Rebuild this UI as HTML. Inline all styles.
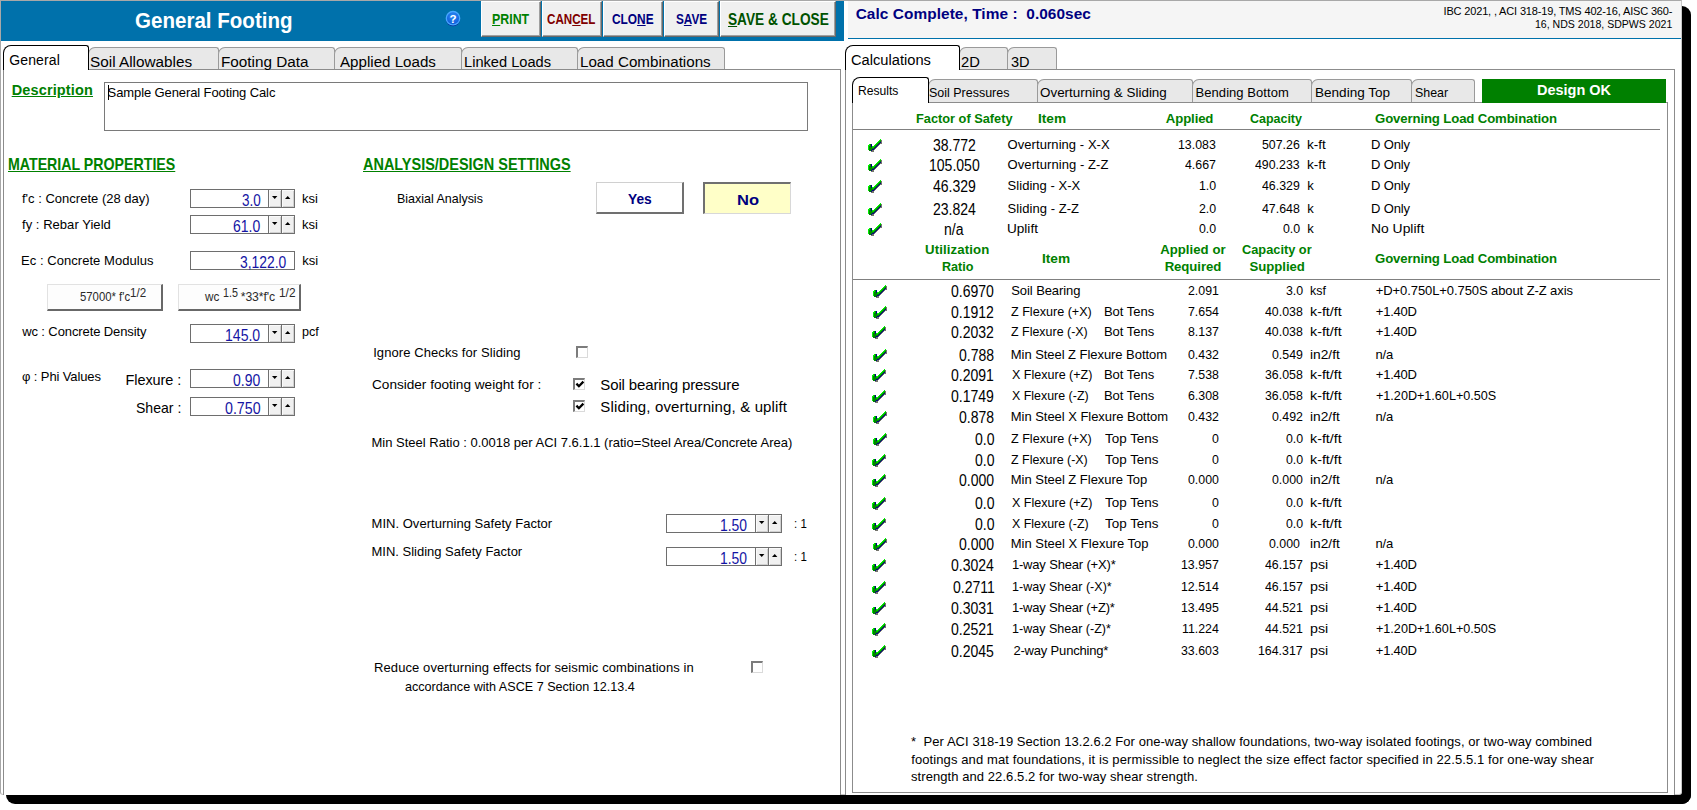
<!DOCTYPE html>
<html><head><meta charset="utf-8"><title>General Footing</title>
<style>
html,body{margin:0;padding:0;}
body{width:1697px;height:810px;background:#fff;position:relative;overflow:hidden;font-family:"Liberation Sans",sans-serif;}
div{position:absolute;box-sizing:border-box;}
.t{position:absolute;white-space:pre;}
svg{position:absolute;overflow:visible;}
u{text-decoration:underline;}
</style></head><body>
<div style="left:1675px;top:6px;width:16px;height:798px;background:#000;border-radius:0 9px 9px 0;"></div>
<div style="left:6px;top:788px;width:1685px;height:16px;background:#000;border-radius:0 0 9px 9px;"></div>
<div style="left:0px;top:0px;width:1682px;height:795px;background:#fff;border-left:1px solid #A8A8A8;border-top:1px solid #A8A8A8;border-bottom:1px solid #C4C4C4;border-right:1px solid #C8C8C8;border-radius:0 0 3px 3px;"></div>
<div style="left:1px;top:1px;width:843px;height:40px;background:#0071AB;"></div>
<span class="t" style="top:9px;font-size:21.3px;line-height:24px;font-weight:bold;color:#fff;left:134.78px;transform:scaleX(0.9650);transform-origin:0 0;">General Footing</span>
<svg style="left:445px;top:10px" width="16" height="17" viewBox="0 0 16 17"><defs><radialGradient id="hg" cx="0.5" cy="0.35" r="0.7"><stop offset="0" stop-color="#2E8CF4"/><stop offset="1" stop-color="#0A54D6"/></radialGradient></defs><circle cx="8" cy="9.2" r="7" fill="#062C9C"/><circle cx="8" cy="8.2" r="6.7" fill="url(#hg)" stroke="#48A8FF" stroke-width="1.3"/><text x="8" y="13" font-family="Liberation Sans" font-weight="bold" font-size="11.5" text-anchor="middle" fill="#fff">?</text></svg>
<div style="left:481px;top:1px;width:60px;height:36px;background:#F0F0F0;border-top:1px solid #fff;border-left:1px solid #fff;border-right:1px solid #696969;border-bottom:1px solid #696969;box-shadow:inset -1px -1px 0 #A0A0A0;"></div>
<span class="t" style="top:11px;font-size:14.5px;line-height:16px;font-weight:bold;color:#008000;left:491.80px;transform:scaleX(0.8535);transform-origin:0 0;"><u>P</u>RINT</span>
<div style="left:542px;top:1px;width:60px;height:36px;background:#F0F0F0;border-top:1px solid #fff;border-left:1px solid #fff;border-right:1px solid #696969;border-bottom:1px solid #696969;box-shadow:inset -1px -1px 0 #A0A0A0;"></div>
<span class="t" style="top:11px;font-size:14.5px;line-height:16px;font-weight:bold;color:#800000;left:546.94px;transform:scaleX(0.8017);transform-origin:0 0;">CAN<u>C</u>EL</span>
<div style="left:603px;top:1px;width:59.5px;height:36px;background:#F0F0F0;border-top:1px solid #fff;border-left:1px solid #fff;border-right:1px solid #696969;border-bottom:1px solid #696969;box-shadow:inset -1px -1px 0 #A0A0A0;"></div>
<span class="t" style="top:11px;font-size:14.5px;line-height:16px;font-weight:bold;color:#000080;left:612.12px;transform:scaleX(0.8195);transform-origin:0 0;">CLO<u>N</u>E</span>
<div style="left:664px;top:1px;width:55px;height:36px;background:#F0F0F0;border-top:1px solid #fff;border-left:1px solid #fff;border-right:1px solid #696969;border-bottom:1px solid #696969;box-shadow:inset -1px -1px 0 #A0A0A0;"></div>
<span class="t" style="top:11px;font-size:14.5px;line-height:16px;font-weight:bold;color:#000080;left:676.05px;transform:scaleX(0.8126);transform-origin:0 0;">S<u>A</u>VE</span>
<div style="left:720px;top:1px;width:116px;height:36px;background:#F0F0F0;border-top:1px solid #fff;border-left:1px solid #fff;border-right:1px solid #696969;border-bottom:1px solid #696969;box-shadow:inset -1px -1px 0 #A0A0A0;"></div>
<span class="t" style="top:11px;font-size:15.6px;line-height:17px;font-weight:bold;color:#005200;left:727.69px;transform:scaleX(0.8766);transform-origin:0 0;"><u>S</u>AVE &amp; CLOSE</span>
<div style="left:3px;top:69px;width:838px;height:726px;border:1px solid #8C8C8C;border-bottom:none;background:#fff;"></div>
<div style="left:3px;top:45px;width:86px;height:25px;background:#fff;border:1px solid #000;border-bottom:none;border-radius:8px 3px 0 0;z-index:2;"></div>
<span class="t" style="top:52px;font-size:14px;line-height:16px;letter-spacing:0.107px;left:9.30px;z-index:3;">General</span>
<div style="left:88px;top:47px;width:131px;height:22px;background:#E8E8E8;border:1px solid #9A9A9A;border-bottom:none;border-radius:7px 3px 0 0;"></div>
<span class="t" style="top:54px;font-size:14px;line-height:16px;left:89.91px;transform:scaleX(1.0936);transform-origin:0 0;z-index:3;">Soil Allowables</span>
<div style="left:218px;top:47px;width:117px;height:22px;background:#E8E8E8;border:1px solid #9A9A9A;border-bottom:none;border-radius:7px 3px 0 0;"></div>
<span class="t" style="top:54px;font-size:14px;line-height:16px;left:220.88px;transform:scaleX(1.0923);transform-origin:0 0;z-index:3;">Footing Data</span>
<div style="left:334px;top:47px;width:127.5px;height:22px;background:#E8E8E8;border:1px solid #9A9A9A;border-bottom:none;border-radius:7px 3px 0 0;"></div>
<span class="t" style="top:54px;font-size:14px;line-height:16px;left:339.60px;transform:scaleX(1.0808);transform-origin:0 0;z-index:3;">Applied Loads</span>
<div style="left:461px;top:47px;width:117px;height:22px;background:#E8E8E8;border:1px solid #9A9A9A;border-bottom:none;border-radius:7px 3px 0 0;"></div>
<span class="t" style="top:54px;font-size:14px;line-height:16px;left:464.43px;transform:scaleX(1.0454);transform-origin:0 0;z-index:3;">Linked Loads</span>
<div style="left:577px;top:47px;width:148px;height:22px;background:#E8E8E8;border:1px solid #9A9A9A;border-bottom:none;border-radius:7px 3px 0 0;"></div>
<span class="t" style="top:54px;font-size:14px;line-height:16px;left:580.39px;transform:scaleX(1.0832);transform-origin:0 0;z-index:3;">Load Combinations</span>
<span class="t" style="top:82px;font-size:14.5px;line-height:16px;font-weight:bold;color:#008000;letter-spacing:0.146px;left:11.66px;text-decoration:underline;">Description</span>
<div style="left:104px;top:82px;width:704px;height:49px;border:1px solid #7A7A7A;background:#fff;"></div>
<div style="left:108px;top:85px;width:1px;height:15px;background:#000;"></div>
<span class="t" style="top:85px;font-size:13px;line-height:15px;letter-spacing:-0.106px;left:107.61px;">Sample General Footing Calc</span>
<span class="t" style="top:155px;font-size:16.3px;line-height:18px;font-weight:bold;color:#008000;left:8.08px;transform:scaleX(0.8708);transform-origin:0 0;text-decoration:underline;">MATERIAL PROPERTIES</span>
<span class="t" style="top:155px;font-size:16.3px;line-height:18px;font-weight:bold;color:#008000;left:362.64px;transform:scaleX(0.8884);transform-origin:0 0;text-decoration:underline;">ANALYSIS/DESIGN SETTINGS</span>
<span class="t" style="top:191px;font-size:13px;line-height:15px;letter-spacing:0.008px;left:21.97px;">f&#x27;c : Concrete (28 day)</span>
<div style="left:190px;top:189px;width:105px;height:19px;border:1px solid #6E6E6E;background:#fff;"></div>
<span class="t" style="top:192px;font-size:16px;line-height:17px;color:#1414A4;left:241.53px;transform:scaleX(0.8428);transform-origin:0 0;">3.0</span>
<div style="left:268px;top:190px;width:14px;height:17px;background:#F0F0F0;border-left:1px solid #707070;border-right:1px solid #707070;box-shadow:inset 1px 1px 0 #FAFAFA, inset -1px -1px 0 #D0D0D0;"></div>
<svg style="left:272.3px;top:196px" width="6" height="3"><path d="M0 0 L5.4 0 L2.7 3 Z" fill="#000"/></svg>
<div style="left:281px;top:190px;width:14px;height:17px;background:#F0F0F0;border-left:1px solid #707070;border-right:1px solid #707070;box-shadow:inset 1px 1px 0 #FAFAFA, inset -1px -1px 0 #D0D0D0;"></div>
<svg style="left:285.3px;top:196px" width="6" height="3"><path d="M0 3 L2.7 0 L5.4 3 Z" fill="#000"/></svg>
<span class="t" style="top:191px;font-size:13px;line-height:15px;left:301.95px;">ksi</span>
<span class="t" style="top:217px;font-size:13px;line-height:15px;letter-spacing:0.045px;left:21.97px;">fy : Rebar Yield</span>
<div style="left:190px;top:215px;width:105px;height:19px;border:1px solid #6E6E6E;background:#fff;"></div>
<span class="t" style="top:218px;font-size:16px;line-height:17px;color:#1414A4;left:233.10px;transform:scaleX(0.8737);transform-origin:0 0;">61.0</span>
<div style="left:268px;top:216px;width:14px;height:17px;background:#F0F0F0;border-left:1px solid #707070;border-right:1px solid #707070;box-shadow:inset 1px 1px 0 #FAFAFA, inset -1px -1px 0 #D0D0D0;"></div>
<svg style="left:272.3px;top:222px" width="6" height="3"><path d="M0 0 L5.4 0 L2.7 3 Z" fill="#000"/></svg>
<div style="left:281px;top:216px;width:14px;height:17px;background:#F0F0F0;border-left:1px solid #707070;border-right:1px solid #707070;box-shadow:inset 1px 1px 0 #FAFAFA, inset -1px -1px 0 #D0D0D0;"></div>
<svg style="left:285.3px;top:222px" width="6" height="3"><path d="M0 3 L2.7 0 L5.4 3 Z" fill="#000"/></svg>
<span class="t" style="top:217px;font-size:13px;line-height:15px;left:301.95px;">ksi</span>
<span class="t" style="top:253px;font-size:13px;line-height:15px;letter-spacing:0.045px;left:21.06px;">Ec : Concrete Modulus</span>
<div style="left:190px;top:251px;width:105px;height:19px;border:1px solid #6E6E6E;background:#fff;"></div>
<span class="t" style="top:254px;font-size:16px;line-height:17px;color:#1414A4;left:240.21px;transform:scaleX(0.8672);transform-origin:0 0;">3,122.0</span>
<span class="t" style="top:253px;font-size:13px;line-height:15px;left:302.36px;">ksi</span>
<div style="left:47px;top:284px;width:116px;height:27px;background:#FDFDFD;border-top:1px solid #E2E2E2;border-left:1px solid #E2E2E2;border-right:2px solid #686868;border-bottom:2px solid #686868;"></div>
<div style="left:178px;top:284px;width:123px;height:27px;background:#FDFDFD;border-top:1px solid #E2E2E2;border-left:1px solid #E2E2E2;border-right:2px solid #686868;border-bottom:2px solid #686868;"></div>
<span class="t" style="top:290px;font-size:12.2px;line-height:14px;color:#2A2A2A;left:79.85px;transform:scaleX(0.9308);transform-origin:0 0;">57000* f&#x27;c</span>
<span class="t" style="top:285px;font-size:12.8px;line-height:15px;color:#2A2A2A;left:130.13px;transform:scaleX(0.9043);transform-origin:0 0;">1/2</span>
<span class="t" style="top:290px;font-size:12.2px;line-height:14px;color:#2A2A2A;left:204.66px;transform:scaleX(0.9631);transform-origin:0 0;">wc</span>
<span class="t" style="top:286px;font-size:12px;line-height:14px;color:#2A2A2A;left:223.49px;transform:scaleX(0.8954);transform-origin:0 0;">1.5</span>
<span class="t" style="top:290px;font-size:12.2px;line-height:14px;color:#2A2A2A;letter-spacing:-0.067px;left:240.72px;">*33*f&#x27;c</span>
<span class="t" style="top:285px;font-size:12.8px;line-height:15px;color:#2A2A2A;left:278.71px;transform:scaleX(0.9289);transform-origin:0 0;">1/2</span>
<span class="t" style="top:324px;font-size:13px;line-height:15px;letter-spacing:-0.104px;left:22.17px;">wc : Concrete Density</span>
<div style="left:190px;top:324px;width:105px;height:19px;border:1px solid #6E6E6E;background:#fff;"></div>
<span class="t" style="top:327px;font-size:16px;line-height:17px;color:#1414A4;left:225.15px;transform:scaleX(0.8787);transform-origin:0 0;">145.0</span>
<div style="left:268px;top:325px;width:14px;height:17px;background:#F0F0F0;border-left:1px solid #707070;border-right:1px solid #707070;box-shadow:inset 1px 1px 0 #FAFAFA, inset -1px -1px 0 #D0D0D0;"></div>
<svg style="left:272.3px;top:331px" width="6" height="3"><path d="M0 0 L5.4 0 L2.7 3 Z" fill="#000"/></svg>
<div style="left:281px;top:325px;width:14px;height:17px;background:#F0F0F0;border-left:1px solid #707070;border-right:1px solid #707070;box-shadow:inset 1px 1px 0 #FAFAFA, inset -1px -1px 0 #D0D0D0;"></div>
<svg style="left:285.3px;top:331px" width="6" height="3"><path d="M0 3 L2.7 0 L5.4 3 Z" fill="#000"/></svg>
<span class="t" style="top:324px;font-size:13px;line-height:15px;left:302.38px;transform:scaleX(0.9691);transform-origin:0 0;">pcf</span>
<span class="t" style="top:369px;font-size:13px;line-height:15px;letter-spacing:-0.123px;left:22.08px;">φ : Phi Values</span>
<span class="t" style="top:372px;font-size:14.5px;line-height:16px;letter-spacing:-0.067px;left:125.44px;">Flexure :</span>
<div style="left:190px;top:369px;width:105px;height:19px;border:1px solid #6E6E6E;background:#fff;"></div>
<span class="t" style="top:372px;font-size:16px;line-height:17px;color:#1414A4;left:233.11px;transform:scaleX(0.8733);transform-origin:0 0;">0.90</span>
<div style="left:268px;top:370px;width:14px;height:17px;background:#F0F0F0;border-left:1px solid #707070;border-right:1px solid #707070;box-shadow:inset 1px 1px 0 #FAFAFA, inset -1px -1px 0 #D0D0D0;"></div>
<svg style="left:272.3px;top:376px" width="6" height="3"><path d="M0 0 L5.4 0 L2.7 3 Z" fill="#000"/></svg>
<div style="left:281px;top:370px;width:14px;height:17px;background:#F0F0F0;border-left:1px solid #707070;border-right:1px solid #707070;box-shadow:inset 1px 1px 0 #FAFAFA, inset -1px -1px 0 #D0D0D0;"></div>
<svg style="left:285.3px;top:376px" width="6" height="3"><path d="M0 3 L2.7 0 L5.4 3 Z" fill="#000"/></svg>
<span class="t" style="top:400px;font-size:14.5px;line-height:16px;left:135.97px;transform:scaleX(0.9686);transform-origin:0 0;">Shear :</span>
<div style="left:190px;top:397px;width:105px;height:19px;border:1px solid #6E6E6E;background:#fff;"></div>
<span class="t" style="top:400px;font-size:16px;line-height:17px;color:#1414A4;left:224.80px;transform:scaleX(0.8873);transform-origin:0 0;">0.750</span>
<div style="left:268px;top:398px;width:14px;height:17px;background:#F0F0F0;border-left:1px solid #707070;border-right:1px solid #707070;box-shadow:inset 1px 1px 0 #FAFAFA, inset -1px -1px 0 #D0D0D0;"></div>
<svg style="left:272.3px;top:404px" width="6" height="3"><path d="M0 0 L5.4 0 L2.7 3 Z" fill="#000"/></svg>
<div style="left:281px;top:398px;width:14px;height:17px;background:#F0F0F0;border-left:1px solid #707070;border-right:1px solid #707070;box-shadow:inset 1px 1px 0 #FAFAFA, inset -1px -1px 0 #D0D0D0;"></div>
<svg style="left:285.3px;top:404px" width="6" height="3"><path d="M0 3 L2.7 0 L5.4 3 Z" fill="#000"/></svg>
<span class="t" style="top:191px;font-size:13px;line-height:15px;left:397.00px;transform:scaleX(0.9583);transform-origin:0 0;">Biaxial Analysis</span>
<div style="left:595.5px;top:182px;width:88.5px;height:31.5px;background:#fff;border-top:1px solid #D0D0D0;border-left:1px solid #D0D0D0;border-right:2px solid #707070;border-bottom:2px solid #707070;"></div>
<span class="t" style="top:191px;font-size:14.5px;line-height:16px;font-weight:bold;color:#000080;left:627.99px;transform:scaleX(0.9498);transform-origin:0 0;">Yes</span>
<div style="left:702.5px;top:182px;width:88.5px;height:31.5px;background:#FFFFC8;border-top:2px solid #707070;border-left:2px solid #707070;border-right:1px solid #D8D8D8;border-bottom:1px solid #D8D8D8;"></div>
<span class="t" style="top:192px;font-size:14.5px;line-height:16px;font-weight:bold;color:#000080;left:736.58px;transform:scaleX(1.1382);transform-origin:0 0;">No</span>
<span class="t" style="top:345px;font-size:13px;line-height:15px;letter-spacing:0.089px;left:373.13px;">Ignore Checks for Sliding</span>
<div style="left:576px;top:346px;width:12px;height:12px;background:#fff;border-top:2px solid #7C7C7C;border-left:2px solid #7C7C7C;border-right:1px solid #DADADA;border-bottom:1px solid #DADADA;"></div>
<span class="t" style="top:377px;font-size:13px;line-height:15px;left:371.92px;transform:scaleX(1.0456);transform-origin:0 0;">Consider footing weight for :</span>
<div style="left:573px;top:378px;width:12px;height:12px;background:#fff;border-top:2px solid #7C7C7C;border-left:2px solid #7C7C7C;border-right:1px solid #DADADA;border-bottom:1px solid #DADADA;"></div>
<svg style="left:575.6px;top:381px" width="8" height="8"><path d="M0.4 2.6 L2.9 5.2 L7.4 0.6" stroke="#000" stroke-width="2.3" fill="none"/></svg>
<span class="t" style="top:376px;font-size:15px;line-height:17px;letter-spacing:-0.129px;left:600.33px;">Soil bearing pressure</span>
<div style="left:573px;top:400px;width:12px;height:12px;background:#fff;border-top:2px solid #7C7C7C;border-left:2px solid #7C7C7C;border-right:1px solid #DADADA;border-bottom:1px solid #DADADA;"></div>
<svg style="left:575.6px;top:403px" width="8" height="8"><path d="M0.4 2.6 L2.9 5.2 L7.4 0.6" stroke="#000" stroke-width="2.3" fill="none"/></svg>
<span class="t" style="top:398px;font-size:15px;line-height:17px;letter-spacing:0.141px;left:600.33px;">Sliding, overturning, &amp; uplift</span>
<span class="t" style="top:435px;font-size:13px;line-height:15px;letter-spacing:-0.003px;left:371.56px;">Min Steel Ratio : 0.0018 per ACI 7.6.1.1 (ratio=Steel Area/Concrete Area)</span>
<span class="t" style="top:516px;font-size:13px;line-height:15px;letter-spacing:0.025px;left:371.56px;">MIN. Overturning Safety Factor</span>
<div style="left:666px;top:514px;width:116px;height:19px;border:1px solid #6E6E6E;background:#fff;"></div>
<span class="t" style="top:517px;font-size:16px;line-height:17px;color:#1414A4;left:720.26px;transform:scaleX(0.8685);transform-origin:0 0;">1.50</span>
<div style="left:755px;top:515px;width:14px;height:17px;background:#F0F0F0;border-left:1px solid #707070;border-right:1px solid #707070;box-shadow:inset 1px 1px 0 #FAFAFA, inset -1px -1px 0 #D0D0D0;"></div>
<svg style="left:759.3px;top:521px" width="6" height="3"><path d="M0 0 L5.4 0 L2.7 3 Z" fill="#000"/></svg>
<div style="left:768px;top:515px;width:14px;height:17px;background:#F0F0F0;border-left:1px solid #707070;border-right:1px solid #707070;box-shadow:inset 1px 1px 0 #FAFAFA, inset -1px -1px 0 #D0D0D0;"></div>
<svg style="left:772.3px;top:521px" width="6" height="3"><path d="M0 3 L2.7 0 L5.4 3 Z" fill="#000"/></svg>
<span class="t" style="top:516px;font-size:13px;line-height:15px;left:794.17px;transform:scaleX(0.8836);transform-origin:0 0;">: 1</span>
<span class="t" style="top:544px;font-size:13px;line-height:15px;letter-spacing:-0.014px;left:371.56px;">MIN. Sliding Safety Factor</span>
<div style="left:666px;top:547px;width:116px;height:19px;border:1px solid #6E6E6E;background:#fff;"></div>
<span class="t" style="top:550px;font-size:16px;line-height:17px;color:#1414A4;left:720.26px;transform:scaleX(0.8685);transform-origin:0 0;">1.50</span>
<div style="left:755px;top:548px;width:14px;height:17px;background:#F0F0F0;border-left:1px solid #707070;border-right:1px solid #707070;box-shadow:inset 1px 1px 0 #FAFAFA, inset -1px -1px 0 #D0D0D0;"></div>
<svg style="left:759.3px;top:554px" width="6" height="3"><path d="M0 0 L5.4 0 L2.7 3 Z" fill="#000"/></svg>
<div style="left:768px;top:548px;width:14px;height:17px;background:#F0F0F0;border-left:1px solid #707070;border-right:1px solid #707070;box-shadow:inset 1px 1px 0 #FAFAFA, inset -1px -1px 0 #D0D0D0;"></div>
<svg style="left:772.3px;top:554px" width="6" height="3"><path d="M0 3 L2.7 0 L5.4 3 Z" fill="#000"/></svg>
<span class="t" style="top:549px;font-size:13px;line-height:15px;left:794.17px;transform:scaleX(0.8836);transform-origin:0 0;">: 1</span>
<span class="t" style="top:660px;font-size:13px;line-height:15px;letter-spacing:0.093px;left:374.06px;">Reduce overturning effects for seismic combinations in</span>
<span class="t" style="top:679px;font-size:13px;line-height:15px;left:405.10px;transform:scaleX(0.9691);transform-origin:0 0;">accordance with ASCE 7 Section 12.13.4</span>
<div style="left:751px;top:661px;width:12px;height:12px;background:#fff;border-top:2px solid #7C7C7C;border-left:2px solid #7C7C7C;border-right:1px solid #DADADA;border-bottom:1px solid #DADADA;"></div>
<style>.ck{position:absolute;width:1px;height:1px;background:transparent;box-shadow:13px 0px 0 0 #00F000,12px 1px 0 0 #00F000,13px 1px 0 0 #00B400,14px 1px 0 0 #74746C,11px 2px 0 0 #00F000,12px 2px 0 0 #00B400,13px 2px 0 0 #008400,14px 2px 0 0 #74746C,10px 3px 0 0 #00F000,11px 3px 0 0 #00B400,12px 3px 0 0 #008400,13px 3px 0 0 #000088,14px 3px 0 0 #74746C,9px 4px 0 0 #00F000,10px 4px 0 0 #00B400,11px 4px 0 0 #008400,12px 4px 0 0 #000088,13px 4px 0 0 #74746C,14px 4px 0 0 #74746C,2px 5px 0 0 #00F000,3px 5px 0 0 #008400,4px 5px 0 0 #000088,8px 5px 0 0 #00F000,9px 5px 0 0 #00B400,10px 5px 0 0 #008400,11px 5px 0 0 #000088,12px 5px 0 0 #74746C,1px 6px 0 0 #00F000,2px 6px 0 0 #00F000,3px 6px 0 0 #008400,4px 6px 0 0 #000088,7px 6px 0 0 #00F000,8px 6px 0 0 #00B400,9px 6px 0 0 #008400,10px 6px 0 0 #000088,11px 6px 0 0 #74746C,1px 7px 0 0 #00F000,2px 7px 0 0 #008400,3px 7px 0 0 #008400,4px 7px 0 0 #000088,5px 7px 0 0 #00F000,6px 7px 0 0 #00F000,7px 7px 0 0 #00B400,8px 7px 0 0 #008400,9px 7px 0 0 #000088,10px 7px 0 0 #74746C,1px 8px 0 0 #00F000,2px 8px 0 0 #008400,3px 8px 0 0 #008400,4px 8px 0 0 #008400,5px 8px 0 0 #00B400,6px 8px 0 0 #00B400,7px 8px 0 0 #008400,8px 8px 0 0 #000088,9px 8px 0 0 #74746C,1px 9px 0 0 #00F000,2px 9px 0 0 #008400,3px 9px 0 0 #008400,4px 9px 0 0 #008400,5px 9px 0 0 #008400,6px 9px 0 0 #008400,7px 9px 0 0 #000088,8px 9px 0 0 #74746C,1px 10px 0 0 #00F000,2px 10px 0 0 #008400,3px 10px 0 0 #008400,4px 10px 0 0 #008400,5px 10px 0 0 #000088,6px 10px 0 0 #000088,7px 10px 0 0 #74746C,2px 11px 0 0 #008400,3px 11px 0 0 #008400,4px 11px 0 0 #000088,5px 11px 0 0 #74746C,6px 11px 0 0 #74746C,4px 12px 0 0 #74746C,5px 12px 0 0 #74746C,6px 12px 0 0 #74746C;}</style>
<div style="left:848px;top:1px;width:833px;height:37px;background:#F5F5F5;"></div>
<div style="left:848px;top:38px;width:833px;height:1px;background:#0071AB;"></div>
<span class="t" style="top:5px;font-size:15.4px;line-height:17px;font-weight:bold;color:#000080;letter-spacing:0.067px;left:855.68px;">Calc Complete, Time :  0.060sec</span>
<span class="t" style="top:5px;font-size:11px;line-height:12px;letter-spacing:-0.156px;left:1443.51px;">IBC 2021, , ACI 318-19, TMS 402-16, AISC 360-</span>
<span class="t" style="top:18px;font-size:11px;line-height:12px;left:1535.21px;transform:scaleX(0.9595);transform-origin:0 0;">16, NDS 2018, SDPWS 2021</span>
<div style="left:845px;top:69px;width:830px;height:726px;border:1px solid #8C8C8C;border-bottom:none;background:#fff;"></div>
<div style="left:845px;top:45px;width:115px;height:25px;background:#fff;border:1px solid #000;border-bottom:none;border-radius:8px 3px 0 0;z-index:2;"></div>
<span class="t" style="top:52px;font-size:14px;line-height:16px;left:851.17px;transform:scaleX(1.0474);transform-origin:0 0;z-index:3;">Calculations</span>
<div style="left:959px;top:47px;width:48.5px;height:22px;background:#E8E8E8;border:1px solid #9A9A9A;border-bottom:none;border-radius:7px 3px 0 0;"></div>
<span class="t" style="top:54px;font-size:14px;line-height:16px;left:961.46px;transform:scaleX(1.0533);transform-origin:0 0;z-index:3;">2D</span>
<div style="left:1006.5px;top:47px;width:50.200000000000045px;height:22px;background:#E8E8E8;border:1px solid #9A9A9A;border-bottom:none;border-radius:7px 3px 0 0;"></div>
<span class="t" style="top:54px;font-size:14px;line-height:16px;left:1010.59px;transform:scaleX(1.0400);transform-origin:0 0;z-index:3;">3D</span>
<div style="left:852px;top:102px;width:816px;height:691px;border:1px solid #8C8C8C;background:#fff;"></div>
<div style="left:852px;top:77px;width:76.5px;height:26px;background:#fff;border:1px solid #000;border-bottom:none;border-radius:8px 3px 0 0;z-index:2;"></div>
<span class="t" style="top:83px;font-size:13px;line-height:15px;left:858.23px;transform:scaleX(0.9317);transform-origin:0 0;z-index:3;">Results</span>
<div style="left:927.5px;top:79px;width:110.0px;height:23px;background:#E8E8E8;border:1px solid #9A9A9A;border-bottom:none;border-radius:7px 3px 0 0;"></div>
<span class="t" style="top:85px;font-size:13px;line-height:15px;left:929.44px;transform:scaleX(0.9596);transform-origin:0 0;z-index:3;">Soil Pressures</span>
<div style="left:1036.5px;top:79px;width:156.5px;height:23px;background:#E8E8E8;border:1px solid #9A9A9A;border-bottom:none;border-radius:7px 3px 0 0;"></div>
<span class="t" style="top:85px;font-size:13px;line-height:15px;left:1040.00px;transform:scaleX(1.0322);transform-origin:0 0;z-index:3;">Overturning &amp; Sliding</span>
<div style="left:1192px;top:79px;width:120px;height:23px;background:#E8E8E8;border:1px solid #9A9A9A;border-bottom:none;border-radius:7px 3px 0 0;"></div>
<span class="t" style="top:85px;font-size:13px;line-height:15px;letter-spacing:0.056px;left:1195.56px;z-index:3;">Bending Bottom</span>
<div style="left:1311px;top:79px;width:101px;height:23px;background:#E8E8E8;border:1px solid #9A9A9A;border-bottom:none;border-radius:7px 3px 0 0;"></div>
<span class="t" style="top:85px;font-size:13px;line-height:15px;left:1314.52px;transform:scaleX(1.0417);transform-origin:0 0;z-index:3;">Bending Top</span>
<div style="left:1411px;top:79px;width:64px;height:23px;background:#E8E8E8;border:1px solid #9A9A9A;border-bottom:none;border-radius:7px 3px 0 0;"></div>
<span class="t" style="top:85px;font-size:13px;line-height:15px;left:1415.04px;transform:scaleX(0.9549);transform-origin:0 0;z-index:3;">Shear</span>
<div style="left:1482px;top:79px;width:184px;height:23.5px;background:#008000;"></div>
<span class="t" style="top:81px;font-size:15px;line-height:17px;font-weight:bold;color:#fff;left:1536.56px;transform:scaleX(0.9656);transform-origin:0 0;">Design OK</span>
<span class="t" style="top:111px;font-size:13.2px;line-height:15px;font-weight:bold;color:#008000;left:916.27px;transform:scaleX(0.9686);transform-origin:0 0;">Factor of Safety</span>
<span class="t" style="top:111px;font-size:13.2px;line-height:15px;font-weight:bold;color:#008000;left:1038.11px;transform:scaleX(1.0363);transform-origin:0 0;">Item</span>
<span class="t" style="top:111px;font-size:13.2px;line-height:15px;font-weight:bold;color:#008000;letter-spacing:-0.132px;left:1165.87px;">Applied</span>
<span class="t" style="top:111px;font-size:13.2px;line-height:15px;font-weight:bold;color:#008000;left:1250.10px;transform:scaleX(0.9451);transform-origin:0 0;">Capacity</span>
<span class="t" style="top:111px;font-size:13.2px;line-height:15px;font-weight:bold;color:#008000;letter-spacing:-0.136px;left:1375.07px;">Governing Load Combination</span>
<div style="left:853px;top:129px;width:807px;height:1px;background:#808080;"></div>
<div class="ck" style="left:867px;top:139px"></div>
<span class="t" style="top:137px;font-size:16px;line-height:17px;left:933.20px;transform:scaleX(0.8770);transform-origin:0 0;">38.772</span>
<span class="t" style="top:137px;font-size:13px;line-height:15px;letter-spacing:0.057px;left:1007.62px;">Overturning - X-X</span>
<span class="t" style="top:137px;font-size:13px;line-height:15px;left:1178.00px;transform:scaleX(0.9500);transform-origin:0 0;">13.083</span>
<span class="t" style="top:137px;font-size:13px;line-height:15px;left:1262.00px;transform:scaleX(0.9500);transform-origin:0 0;">507.26</span>
<span class="t" style="top:137px;font-size:13px;line-height:15px;left:1307.12px;transform:scaleX(1.0471);transform-origin:0 0;">k-ft</span>
<span class="t" style="top:137px;font-size:13px;line-height:15px;letter-spacing:-0.135px;left:1370.96px;">D Only</span>
<div class="ck" style="left:867px;top:159px"></div>
<span class="t" style="top:157px;font-size:16px;line-height:17px;left:928.96px;transform:scaleX(0.8770);transform-origin:0 0;">105.050</span>
<span class="t" style="top:157px;font-size:13px;line-height:15px;letter-spacing:0.071px;left:1007.62px;">Overturning - Z-Z</span>
<span class="t" style="top:157px;font-size:13px;line-height:15px;left:1184.98px;transform:scaleX(0.9500);transform-origin:0 0;">4.667</span>
<span class="t" style="top:157px;font-size:13px;line-height:15px;left:1255.15px;transform:scaleX(0.9500);transform-origin:0 0;">490.233</span>
<span class="t" style="top:157px;font-size:13px;line-height:15px;left:1307.12px;transform:scaleX(1.0471);transform-origin:0 0;">k-ft</span>
<span class="t" style="top:157px;font-size:13px;line-height:15px;letter-spacing:-0.135px;left:1370.96px;">D Only</span>
<div class="ck" style="left:867px;top:180px"></div>
<span class="t" style="top:178px;font-size:16px;line-height:17px;left:933.31px;transform:scaleX(0.8770);transform-origin:0 0;">46.329</span>
<span class="t" style="top:178px;font-size:13px;line-height:15px;letter-spacing:0.036px;left:1007.62px;">Sliding - X-X</span>
<span class="t" style="top:178px;font-size:13px;line-height:15px;left:1198.57px;transform:scaleX(0.9500);transform-origin:0 0;">1.0</span>
<span class="t" style="top:178px;font-size:13px;line-height:15px;left:1262.06px;transform:scaleX(0.9500);transform-origin:0 0;">46.329</span>
<span class="t" style="top:178px;font-size:13px;line-height:15px;left:1307.15px;">k</span>
<span class="t" style="top:178px;font-size:13px;line-height:15px;letter-spacing:-0.135px;left:1370.96px;">D Only</span>
<div class="ck" style="left:867px;top:203px"></div>
<span class="t" style="top:201px;font-size:16px;line-height:17px;left:932.96px;transform:scaleX(0.8770);transform-origin:0 0;">23.824</span>
<span class="t" style="top:201px;font-size:13px;line-height:15px;letter-spacing:0.049px;left:1007.62px;">Sliding - Z-Z</span>
<span class="t" style="top:201px;font-size:13px;line-height:15px;left:1198.57px;transform:scaleX(0.9500);transform-origin:0 0;">2.0</span>
<span class="t" style="top:201px;font-size:13px;line-height:15px;left:1262.00px;transform:scaleX(0.9500);transform-origin:0 0;">47.648</span>
<span class="t" style="top:201px;font-size:13px;line-height:15px;left:1307.15px;">k</span>
<span class="t" style="top:201px;font-size:13px;line-height:15px;letter-spacing:-0.135px;left:1370.96px;">D Only</span>
<div class="ck" style="left:867px;top:223px"></div>
<span class="t" style="top:221px;font-size:16px;line-height:17px;left:944.36px;transform:scaleX(0.8770);transform-origin:0 0;">n/a</span>
<span class="t" style="top:221px;font-size:13px;line-height:15px;left:1007.18px;transform:scaleX(1.0443);transform-origin:0 0;">Uplift</span>
<span class="t" style="top:221px;font-size:13px;line-height:15px;left:1198.57px;transform:scaleX(0.9500);transform-origin:0 0;">0.0</span>
<span class="t" style="top:221px;font-size:13px;line-height:15px;left:1282.57px;transform:scaleX(0.9500);transform-origin:0 0;">0.0</span>
<span class="t" style="top:221px;font-size:13px;line-height:15px;left:1307.15px;">k</span>
<span class="t" style="top:221px;font-size:13px;line-height:15px;left:1370.89px;transform:scaleX(1.0681);transform-origin:0 0;">No Uplift</span>
<span class="t" style="top:242px;font-size:13.2px;line-height:15px;font-weight:bold;color:#008000;letter-spacing:0.120px;left:925.06px;">Utilization</span>
<span class="t" style="top:259px;font-size:13.2px;line-height:15px;font-weight:bold;color:#008000;left:941.68px;transform:scaleX(0.9564);transform-origin:0 0;">Ratio</span>
<span class="t" style="top:251px;font-size:13.2px;line-height:15px;font-weight:bold;color:#008000;left:1042.46px;transform:scaleX(1.0363);transform-origin:0 0;">Item</span>
<span class="t" style="top:242px;font-size:13.2px;line-height:15px;font-weight:bold;color:#008000;letter-spacing:0.028px;left:1160.17px;">Applied or</span>
<span class="t" style="top:259px;font-size:13.2px;line-height:15px;font-weight:bold;color:#008000;letter-spacing:-0.072px;left:1164.64px;">Required</span>
<span class="t" style="top:242px;font-size:13.2px;line-height:15px;font-weight:bold;color:#008000;left:1242.49px;transform:scaleX(0.9698);transform-origin:0 0;">Capacity or</span>
<span class="t" style="top:259px;font-size:13.2px;line-height:15px;font-weight:bold;color:#008000;letter-spacing:-0.064px;left:1249.60px;">Supplied</span>
<span class="t" style="top:251px;font-size:13.2px;line-height:15px;font-weight:bold;color:#008000;letter-spacing:-0.136px;left:1375.07px;">Governing Load Combination</span>
<div style="left:853px;top:279px;width:807px;height:1px;background:#808080;"></div>
<div class="ck" style="left:872px;top:285px"></div>
<span class="t" style="top:283px;font-size:16px;line-height:17px;left:951.35px;transform:scaleX(0.8770);transform-origin:0 0;">0.6970</span>
<span class="t" style="top:283px;font-size:13px;line-height:15px;letter-spacing:-0.082px;left:1011.26px;">Soil Bearing</span>
<span class="t" style="top:283px;font-size:13px;line-height:15px;left:1187.98px;transform:scaleX(0.9500);transform-origin:0 0;">2.091</span>
<span class="t" style="top:283px;font-size:13px;line-height:15px;left:1285.77px;transform:scaleX(0.9500);transform-origin:0 0;">3.0</span>
<span class="t" style="top:283px;font-size:13px;line-height:15px;left:1310.39px;transform:scaleX(0.9528);transform-origin:0 0;">ksf</span>
<span class="t" style="top:283px;font-size:13px;line-height:15px;letter-spacing:-0.089px;left:1375.81px;">+D+0.750L+0.750S about Z-Z axis</span>
<div class="ck" style="left:872px;top:306px"></div>
<span class="t" style="top:304px;font-size:16px;line-height:17px;left:951.49px;transform:scaleX(0.8770);transform-origin:0 0;">0.1912</span>
<span class="t" style="top:304px;font-size:13px;line-height:15px;left:1011.47px;transform:scaleX(0.9679);transform-origin:0 0;">Z Flexure (+X)</span>
<span class="t" style="top:304px;font-size:13px;line-height:15px;letter-spacing:-0.011px;left:1103.96px;">Bot Tens</span>
<span class="t" style="top:304px;font-size:13px;line-height:15px;left:1187.73px;transform:scaleX(0.9500);transform-origin:0 0;">7.654</span>
<span class="t" style="top:304px;font-size:13px;line-height:15px;left:1265.20px;transform:scaleX(0.9500);transform-origin:0 0;">40.038</span>
<span class="t" style="top:304px;font-size:13px;line-height:15px;left:1310.27px;transform:scaleX(1.0966);transform-origin:0 0;">k-ft/ft</span>
<span class="t" style="top:304px;font-size:13px;line-height:15px;letter-spacing:-0.236px;left:1375.81px;">+1.40D</span>
<div class="ck" style="left:871px;top:326px"></div>
<span class="t" style="top:324px;font-size:16px;line-height:17px;left:951.49px;transform:scaleX(0.8770);transform-origin:0 0;">0.2032</span>
<span class="t" style="top:324px;font-size:13px;line-height:15px;left:1011.48px;transform:scaleX(0.9571);transform-origin:0 0;">Z Flexure (-X)</span>
<span class="t" style="top:324px;font-size:13px;line-height:15px;letter-spacing:-0.011px;left:1103.96px;">Bot Tens</span>
<span class="t" style="top:324px;font-size:13px;line-height:15px;left:1187.98px;transform:scaleX(0.9500);transform-origin:0 0;">8.137</span>
<span class="t" style="top:324px;font-size:13px;line-height:15px;left:1265.20px;transform:scaleX(0.9500);transform-origin:0 0;">40.038</span>
<span class="t" style="top:324px;font-size:13px;line-height:15px;left:1310.27px;transform:scaleX(1.0966);transform-origin:0 0;">k-ft/ft</span>
<span class="t" style="top:324px;font-size:13px;line-height:15px;letter-spacing:-0.236px;left:1375.81px;">+1.40D</span>
<div class="ck" style="left:872px;top:349px"></div>
<span class="t" style="top:347px;font-size:16px;line-height:17px;left:959.28px;transform:scaleX(0.8770);transform-origin:0 0;">0.788</span>
<span class="t" style="top:347px;font-size:13px;line-height:15px;letter-spacing:-0.051px;left:1010.81px;">Min Steel Z Flexure Bottom</span>
<span class="t" style="top:347px;font-size:13px;line-height:15px;left:1187.98px;transform:scaleX(0.9500);transform-origin:0 0;">0.432</span>
<span class="t" style="top:347px;font-size:13px;line-height:15px;left:1272.18px;transform:scaleX(0.9500);transform-origin:0 0;">0.549</span>
<span class="t" style="top:347px;font-size:13px;line-height:15px;left:1310.31px;transform:scaleX(1.0575);transform-origin:0 0;">in2/ft</span>
<span class="t" style="top:347px;font-size:13px;line-height:15px;letter-spacing:-0.195px;left:1375.55px;">n/a</span>
<div class="ck" style="left:871px;top:369px"></div>
<span class="t" style="top:367px;font-size:16px;line-height:17px;left:951.49px;transform:scaleX(0.8770);transform-origin:0 0;">0.2091</span>
<span class="t" style="top:367px;font-size:13px;line-height:15px;left:1011.60px;transform:scaleX(0.9634);transform-origin:0 0;">X Flexure (+Z)</span>
<span class="t" style="top:367px;font-size:13px;line-height:15px;letter-spacing:-0.011px;left:1103.96px;">Bot Tens</span>
<span class="t" style="top:367px;font-size:13px;line-height:15px;left:1187.92px;transform:scaleX(0.9500);transform-origin:0 0;">7.538</span>
<span class="t" style="top:367px;font-size:13px;line-height:15px;left:1265.20px;transform:scaleX(0.9500);transform-origin:0 0;">36.058</span>
<span class="t" style="top:367px;font-size:13px;line-height:15px;left:1310.27px;transform:scaleX(1.0966);transform-origin:0 0;">k-ft/ft</span>
<span class="t" style="top:367px;font-size:13px;line-height:15px;letter-spacing:-0.236px;left:1375.81px;">+1.40D</span>
<div class="ck" style="left:871px;top:390px"></div>
<span class="t" style="top:388px;font-size:16px;line-height:17px;left:951.49px;transform:scaleX(0.8770);transform-origin:0 0;">0.1749</span>
<span class="t" style="top:388px;font-size:13px;line-height:15px;left:1011.60px;transform:scaleX(0.9555);transform-origin:0 0;">X Flexure (-Z)</span>
<span class="t" style="top:388px;font-size:13px;line-height:15px;letter-spacing:-0.011px;left:1103.96px;">Bot Tens</span>
<span class="t" style="top:388px;font-size:13px;line-height:15px;left:1187.92px;transform:scaleX(0.9500);transform-origin:0 0;">6.308</span>
<span class="t" style="top:388px;font-size:13px;line-height:15px;left:1265.20px;transform:scaleX(0.9500);transform-origin:0 0;">36.058</span>
<span class="t" style="top:388px;font-size:13px;line-height:15px;left:1310.27px;transform:scaleX(1.0966);transform-origin:0 0;">k-ft/ft</span>
<span class="t" style="top:388px;font-size:13px;line-height:15px;left:1375.83px;transform:scaleX(0.9695);transform-origin:0 0;">+1.20D+1.60L+0.50S</span>
<div class="ck" style="left:872px;top:411px"></div>
<span class="t" style="top:409px;font-size:16px;line-height:17px;left:959.28px;transform:scaleX(0.8770);transform-origin:0 0;">0.878</span>
<span class="t" style="top:409px;font-size:13px;line-height:15px;letter-spacing:-0.040px;left:1010.81px;">Min Steel X Flexure Bottom</span>
<span class="t" style="top:409px;font-size:13px;line-height:15px;left:1187.98px;transform:scaleX(0.9500);transform-origin:0 0;">0.432</span>
<span class="t" style="top:409px;font-size:13px;line-height:15px;left:1272.18px;transform:scaleX(0.9500);transform-origin:0 0;">0.492</span>
<span class="t" style="top:409px;font-size:13px;line-height:15px;left:1310.31px;transform:scaleX(1.0575);transform-origin:0 0;">in2/ft</span>
<span class="t" style="top:409px;font-size:13px;line-height:15px;letter-spacing:-0.195px;left:1375.55px;">n/a</span>
<div class="ck" style="left:872px;top:433px"></div>
<span class="t" style="top:431px;font-size:16px;line-height:17px;left:974.79px;transform:scaleX(0.8770);transform-origin:0 0;">0.0</span>
<span class="t" style="top:431px;font-size:13px;line-height:15px;left:1011.47px;transform:scaleX(0.9679);transform-origin:0 0;">Z Flexure (+X)</span>
<span class="t" style="top:431px;font-size:13px;line-height:15px;left:1104.73px;transform:scaleX(1.0335);transform-origin:0 0;">Top Tens</span>
<span class="t" style="top:431px;font-size:13px;line-height:15px;left:1211.88px;transform:scaleX(0.9500);transform-origin:0 0;">0</span>
<span class="t" style="top:431px;font-size:13px;line-height:15px;left:1285.77px;transform:scaleX(0.9500);transform-origin:0 0;">0.0</span>
<span class="t" style="top:431px;font-size:13px;line-height:15px;left:1310.27px;transform:scaleX(1.0966);transform-origin:0 0;">k-ft/ft</span>
<div class="ck" style="left:871px;top:454px"></div>
<span class="t" style="top:452px;font-size:16px;line-height:17px;left:974.79px;transform:scaleX(0.8770);transform-origin:0 0;">0.0</span>
<span class="t" style="top:452px;font-size:13px;line-height:15px;left:1011.48px;transform:scaleX(0.9571);transform-origin:0 0;">Z Flexure (-X)</span>
<span class="t" style="top:452px;font-size:13px;line-height:15px;left:1104.73px;transform:scaleX(1.0335);transform-origin:0 0;">Top Tens</span>
<span class="t" style="top:452px;font-size:13px;line-height:15px;left:1211.88px;transform:scaleX(0.9500);transform-origin:0 0;">0</span>
<span class="t" style="top:452px;font-size:13px;line-height:15px;left:1285.77px;transform:scaleX(0.9500);transform-origin:0 0;">0.0</span>
<span class="t" style="top:452px;font-size:13px;line-height:15px;left:1310.27px;transform:scaleX(1.0966);transform-origin:0 0;">k-ft/ft</span>
<div class="ck" style="left:871px;top:474px"></div>
<span class="t" style="top:472px;font-size:16px;line-height:17px;left:959.21px;transform:scaleX(0.8770);transform-origin:0 0;">0.000</span>
<span class="t" style="top:472px;font-size:13px;line-height:15px;letter-spacing:-0.025px;left:1010.81px;">Min Steel Z Flexure Top</span>
<span class="t" style="top:472px;font-size:13px;line-height:15px;left:1187.86px;transform:scaleX(0.9500);transform-origin:0 0;">0.000</span>
<span class="t" style="top:472px;font-size:13px;line-height:15px;left:1272.06px;transform:scaleX(0.9500);transform-origin:0 0;">0.000</span>
<span class="t" style="top:472px;font-size:13px;line-height:15px;left:1310.31px;transform:scaleX(1.0575);transform-origin:0 0;">in2/ft</span>
<span class="t" style="top:472px;font-size:13px;line-height:15px;letter-spacing:-0.195px;left:1375.55px;">n/a</span>
<div class="ck" style="left:871px;top:497px"></div>
<span class="t" style="top:495px;font-size:16px;line-height:17px;left:974.79px;transform:scaleX(0.8770);transform-origin:0 0;">0.0</span>
<span class="t" style="top:495px;font-size:13px;line-height:15px;left:1011.60px;transform:scaleX(0.9634);transform-origin:0 0;">X Flexure (+Z)</span>
<span class="t" style="top:495px;font-size:13px;line-height:15px;left:1104.73px;transform:scaleX(1.0335);transform-origin:0 0;">Top Tens</span>
<span class="t" style="top:495px;font-size:13px;line-height:15px;left:1211.88px;transform:scaleX(0.9500);transform-origin:0 0;">0</span>
<span class="t" style="top:495px;font-size:13px;line-height:15px;left:1285.77px;transform:scaleX(0.9500);transform-origin:0 0;">0.0</span>
<span class="t" style="top:495px;font-size:13px;line-height:15px;left:1310.27px;transform:scaleX(1.0966);transform-origin:0 0;">k-ft/ft</span>
<div class="ck" style="left:871px;top:518px"></div>
<span class="t" style="top:516px;font-size:16px;line-height:17px;left:974.79px;transform:scaleX(0.8770);transform-origin:0 0;">0.0</span>
<span class="t" style="top:516px;font-size:13px;line-height:15px;left:1011.60px;transform:scaleX(0.9555);transform-origin:0 0;">X Flexure (-Z)</span>
<span class="t" style="top:516px;font-size:13px;line-height:15px;left:1104.73px;transform:scaleX(1.0335);transform-origin:0 0;">Top Tens</span>
<span class="t" style="top:516px;font-size:13px;line-height:15px;left:1211.88px;transform:scaleX(0.9500);transform-origin:0 0;">0</span>
<span class="t" style="top:516px;font-size:13px;line-height:15px;left:1285.77px;transform:scaleX(0.9500);transform-origin:0 0;">0.0</span>
<span class="t" style="top:516px;font-size:13px;line-height:15px;left:1310.27px;transform:scaleX(1.0966);transform-origin:0 0;">k-ft/ft</span>
<div class="ck" style="left:872px;top:538px"></div>
<span class="t" style="top:536px;font-size:16px;line-height:17px;left:959.21px;transform:scaleX(0.8770);transform-origin:0 0;">0.000</span>
<span class="t" style="top:536px;font-size:13px;line-height:15px;letter-spacing:-0.003px;left:1010.81px;">Min Steel X Flexure Top</span>
<span class="t" style="top:536px;font-size:13px;line-height:15px;left:1187.86px;transform:scaleX(0.9500);transform-origin:0 0;">0.000</span>
<span class="t" style="top:536px;font-size:13px;line-height:15px;left:1269.36px;transform:scaleX(0.9500);transform-origin:0 0;">0.000</span>
<span class="t" style="top:536px;font-size:13px;line-height:15px;left:1310.31px;transform:scaleX(1.0575);transform-origin:0 0;">in2/ft</span>
<span class="t" style="top:536px;font-size:13px;line-height:15px;letter-spacing:-0.195px;left:1375.55px;">n/a</span>
<div class="ck" style="left:871px;top:559px"></div>
<span class="t" style="top:557px;font-size:16px;line-height:17px;left:951.21px;transform:scaleX(0.8770);transform-origin:0 0;">0.3024</span>
<span class="t" style="top:557px;font-size:13px;line-height:15px;letter-spacing:-0.171px;left:1011.88px;">1-way Shear (+X)*</span>
<span class="t" style="top:557px;font-size:13px;line-height:15px;left:1181.06px;transform:scaleX(0.9500);transform-origin:0 0;">13.957</span>
<span class="t" style="top:557px;font-size:13px;line-height:15px;left:1265.26px;transform:scaleX(0.9500);transform-origin:0 0;">46.157</span>
<span class="t" style="top:557px;font-size:13px;line-height:15px;left:1310.27px;transform:scaleX(1.0951);transform-origin:0 0;">psi</span>
<span class="t" style="top:557px;font-size:13px;line-height:15px;letter-spacing:-0.236px;left:1375.81px;">+1.40D</span>
<div class="ck" style="left:871px;top:581px"></div>
<span class="t" style="top:579px;font-size:16px;line-height:17px;left:952.55px;transform:scaleX(0.8770);transform-origin:0 0;">0.2711</span>
<span class="t" style="top:579px;font-size:13px;line-height:15px;left:1011.91px;transform:scaleX(0.9650);transform-origin:0 0;">1-way Shear (-X)*</span>
<span class="t" style="top:579px;font-size:13px;line-height:15px;left:1180.82px;transform:scaleX(0.9500);transform-origin:0 0;">12.514</span>
<span class="t" style="top:579px;font-size:13px;line-height:15px;left:1265.26px;transform:scaleX(0.9500);transform-origin:0 0;">46.157</span>
<span class="t" style="top:579px;font-size:13px;line-height:15px;left:1310.27px;transform:scaleX(1.0951);transform-origin:0 0;">psi</span>
<span class="t" style="top:579px;font-size:13px;line-height:15px;letter-spacing:-0.236px;left:1375.81px;">+1.40D</span>
<div class="ck" style="left:871px;top:602px"></div>
<span class="t" style="top:600px;font-size:16px;line-height:17px;left:951.49px;transform:scaleX(0.8770);transform-origin:0 0;">0.3031</span>
<span class="t" style="top:600px;font-size:13px;line-height:15px;letter-spacing:-0.176px;left:1011.88px;">1-way Shear (+Z)*</span>
<span class="t" style="top:600px;font-size:13px;line-height:15px;left:1181.00px;transform:scaleX(0.9500);transform-origin:0 0;">13.495</span>
<span class="t" style="top:600px;font-size:13px;line-height:15px;left:1265.26px;transform:scaleX(0.9500);transform-origin:0 0;">44.521</span>
<span class="t" style="top:600px;font-size:13px;line-height:15px;left:1310.27px;transform:scaleX(1.0951);transform-origin:0 0;">psi</span>
<span class="t" style="top:600px;font-size:13px;line-height:15px;letter-spacing:-0.236px;left:1375.81px;">+1.40D</span>
<div class="ck" style="left:871px;top:623px"></div>
<span class="t" style="top:621px;font-size:16px;line-height:17px;left:951.49px;transform:scaleX(0.8770);transform-origin:0 0;">0.2521</span>
<span class="t" style="top:621px;font-size:13px;line-height:15px;left:1011.91px;transform:scaleX(0.9635);transform-origin:0 0;">1-way Shear (-Z)*</span>
<span class="t" style="top:621px;font-size:13px;line-height:15px;left:1181.74px;transform:scaleX(0.9500);transform-origin:0 0;">11.224</span>
<span class="t" style="top:621px;font-size:13px;line-height:15px;left:1265.26px;transform:scaleX(0.9500);transform-origin:0 0;">44.521</span>
<span class="t" style="top:621px;font-size:13px;line-height:15px;left:1310.27px;transform:scaleX(1.0951);transform-origin:0 0;">psi</span>
<span class="t" style="top:621px;font-size:13px;line-height:15px;left:1375.83px;transform:scaleX(0.9695);transform-origin:0 0;">+1.20D+1.60L+0.50S</span>
<div class="ck" style="left:871px;top:645px"></div>
<span class="t" style="top:643px;font-size:16px;line-height:17px;left:951.42px;transform:scaleX(0.8770);transform-origin:0 0;">0.2045</span>
<span class="t" style="top:643px;font-size:13px;line-height:15px;letter-spacing:-0.187px;left:1013.45px;">2-way Punching*</span>
<span class="t" style="top:643px;font-size:13px;line-height:15px;left:1181.00px;transform:scaleX(0.9500);transform-origin:0 0;">33.603</span>
<span class="t" style="top:643px;font-size:13px;line-height:15px;left:1258.41px;transform:scaleX(0.9500);transform-origin:0 0;">164.317</span>
<span class="t" style="top:643px;font-size:13px;line-height:15px;left:1310.27px;transform:scaleX(1.0951);transform-origin:0 0;">psi</span>
<span class="t" style="top:643px;font-size:13px;line-height:15px;letter-spacing:-0.236px;left:1375.81px;">+1.40D</span>
<span class="t" style="top:734px;font-size:13px;line-height:15px;letter-spacing:0.053px;left:911.11px;">*  Per ACI 318-19 Section 13.2.6.2 For one-way shallow foundations, two-way isolated footings, or two-way combined</span>
<span class="t" style="top:752px;font-size:13px;line-height:15px;letter-spacing:0.109px;left:911.17px;">footings and mat foundations, it is permissible to neglect the size effect factor specified in 22.5.5.1 for one-way shear</span>
<span class="t" style="top:769px;font-size:13px;line-height:15px;letter-spacing:0.074px;left:910.98px;">strength and 22.6.5.2 for two-way shear strength.</span>
</body></html>
